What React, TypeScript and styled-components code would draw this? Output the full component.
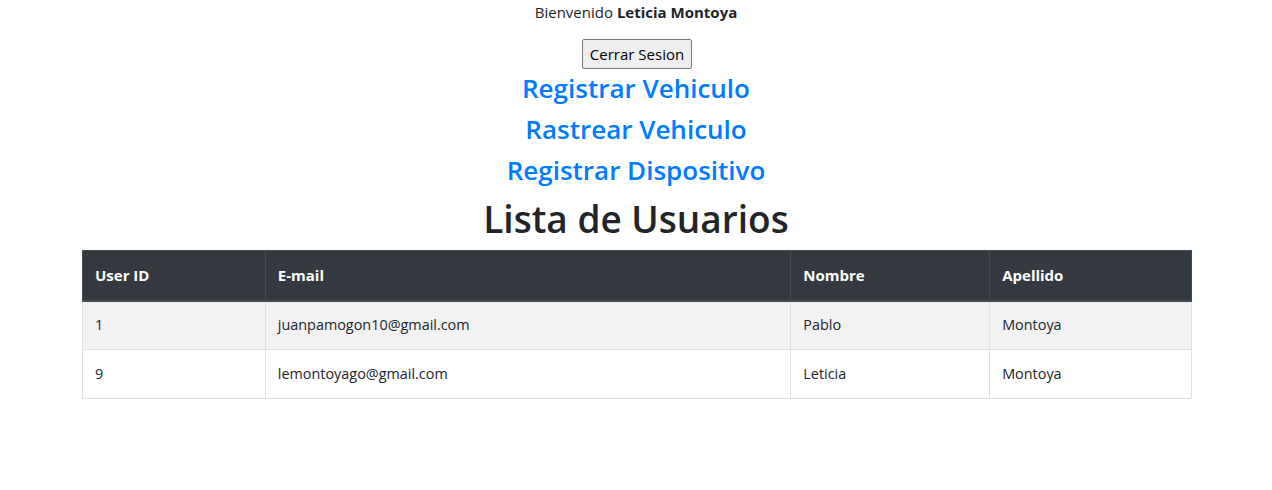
import React from "react";
import styled, { createGlobalStyle } from "styled-components";

const Global = createGlobalStyle`
  * { box-sizing: border-box; }
  body {
    margin: 0;
    font-family: "Open Sans", "Noto Sans", sans-serif;
    font-size: 16px;
    line-height: 24px;
    color: #212529;
    background: #fff;
  }
`;

const Page = styled.div`
  display: flex;
  flex-direction: column;
  align-items: center;
  text-align: center;
`;

const Welcome = styled.p`
  margin: 0 0 15px;
  font-size: 15px;
  line-height: 24px;
  b { font-weight: 700; }
`;

const LogoutButton = styled.button`
  font-family: inherit;
  font-size: 15px;
  line-height: 24px;
  height: 30px;
  margin: 0 0 2px 2px;
  padding: 0 7px;
  color: #000;
  background: #efefef;
  border: 1px solid #767676;
  border-radius: 2px;
`;

const NavLink = styled.a`
  display: block;
  margin: 0 0 7px;
  font-size: 26px;
  line-height: 34px;
  font-weight: 600;
  color: #007bff;
  text-decoration: none;
`;

const Title = styled.h1`
  margin: 0 0 6px;
  font-size: 37px;
  line-height: 50px;
  font-weight: 600;
`;

const Container = styled.div`
  width: 1140px;
  padding: 0 14px 0 16px;
`;

const Table = styled.table`
  width: 100%;
  border-collapse: collapse;
  text-align: left;
  font-size: 14.4px;
`;

const Th = styled.th<{ $w: number }>`
  width: ${(p) => p.$w}px;
  padding: 0 12px;
  height: 50px;
  background: #343a40;
  color: #fff;
  font-size: 15px;
  font-weight: 700;
  border: 1px solid #454d55;
  border-bottom: 2px solid #454d55;
  vertical-align: middle;
`;

const Tr = styled.tr<{ $striped: boolean }>`
  background: ${(p) => (p.$striped ? "#f2f2f2" : "#fff")};
`;

const Td = styled.td`
  padding: 0 12px;
  height: 49px;
  border: 1px solid #dee2e6;
  vertical-align: middle;
`;

const cols = [
  { label: "User ID", w: 183 },
  { label: "E-mail", w: 526 },
  { label: "Nombre", w: 199 },
  { label: "Apellido", w: 202 },
];

const rows = [
  ["1", "juanpamogon10@gmail.com", "Pablo", "Montoya"],
  ["9", "lemontoyago@gmail.com", "Leticia", "Montoya"],
];

export default function App() {
  return (
    <>
      <Global />
      <Page>
        <Welcome>
          Bienvenido <b>Leticia Montoya</b>
        </Welcome>
        <LogoutButton>Cerrar Sesion</LogoutButton>
        <NavLink href="#">Registrar Vehiculo</NavLink>
        <NavLink href="#">Rastrear Vehiculo</NavLink>
        <NavLink href="#">Registrar Dispositivo</NavLink>
        <Title>Lista de Usuarios</Title>
        <Container>
          <Table>
            <thead>
              <tr>
                {cols.map((c) => (
                  <Th key={c.label} $w={c.w}>
                    {c.label}
                  </Th>
                ))}
              </tr>
            </thead>
            <tbody>
              {rows.map((r, i) => (
                <Tr key={i} $striped={i % 2 === 0}>
                  {r.map((v, j) => (
                    <Td key={j}>{v}</Td>
                  ))}
                </Tr>
              ))}
            </tbody>
          </Table>
        </Container>
      </Page>
    </>
  );
}
